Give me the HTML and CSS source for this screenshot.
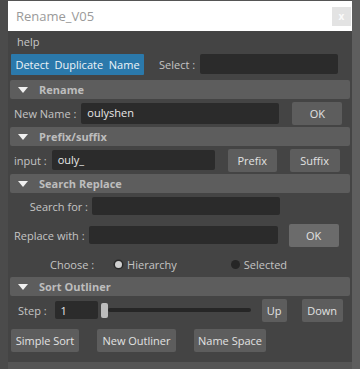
FILE: index.html
```html
<!DOCTYPE html>
<html>
<head>
<meta charset="utf-8">
<link rel="stylesheet" href="styles.css">
</head>
<body>
<div class="desk">
  <div class="win">
    <div class="titlebar">
      <span class="title">Rename_V05</span>
      <span class="close">x</span>
    </div>
    <div class="content">
      <div class="menu">help</div>
      <div class="row r-top">
        <button class="btn blue">Detect&nbsp; Duplicate&nbsp; Name</button>
        <span class="lbl sel-lbl">Select :</span>
        <div class="field sel-field"></div>
      </div>

      <div class="hdr"><span class="tri"></span>Rename</div>
      <div class="row r-name">
        <span class="lbl">New Name :</span>
        <div class="field f-name">oulyshen</div>
        <button class="btn ok1">OK</button>
      </div>

      <div class="hdr"><span class="tri"></span>Prefix/suffix</div>
      <div class="row r-pre">
        <span class="lbl">input :</span>
        <div class="field f-pre">ouly_</div>
        <button class="btn b-pre">Prefix</button>
        <button class="btn b-suf">Suffix</button>
      </div>

      <div class="hdr"><span class="tri"></span>Search Replace</div>
      <div class="row r-search">
        <span class="lbl l-search">Search for :</span>
        <div class="field f-search"></div>
      </div>
      <div class="row r-replace">
        <span class="lbl">Replace with :</span>
        <div class="field f-replace"></div>
        <button class="btn ok2">OK</button>
      </div>
      <div class="row r-choose">
        <span class="lbl l-choose">Choose :</span>
        <span class="radio on"></span><span class="lbl l-hier">Hierarchy</span>
        <span class="radio off"></span><span class="lbl">Selected</span>
      </div>

      <div class="hdr"><span class="tri"></span>Sort Outliner</div>
      <div class="row r-step">
        <span class="lbl l-step">Step :</span>
        <div class="field f-step">1</div>
        <div class="slider"><span class="handle"></span><span class="track"></span></div>
        <button class="btn b-up">Up</button>
        <button class="btn b-down">Down</button>
      </div>
      <div class="row r-btns">
        <button class="btn b-simple">Simple Sort</button>
        <button class="btn b-new">New Outliner</button>
        <button class="btn b-ns">Name Space</button>
      </div>
    </div>
  </div>
</div>
</body>
</html>
```

FILE: styles.css
```css
html, body {
  margin: 0;
  padding: 0;
}
body {
  width: 360px;
  height: 369px;
  overflow: hidden;
  background: #575757;
  font-family: "Open Sans", "Noto Sans", sans-serif;
  font-size: 11px;
  color: #c4c4c4;
}
.desk {
  height: 369px;
  background: linear-gradient(to right, #4b4b4b 0 8px, #555 8px 352px, #5e5e5e 352px);
  padding-top: 1px;
  box-sizing: border-box;
}
.win {
  margin-left: 8px;
  width: 344px;
}
.titlebar {
  height: 30px;
  background: #ffffff;
  display: flex;
  align-items: center;
  justify-content: space-between;
  padding: 0 1px 0 8px;
  box-sizing: border-box;
}
.title {
  color: #9a9a9a;
  font-size: 13px;
  font-family: "Open Sans", sans-serif;
}
.close {
  width: 19px;
  height: 19px;
  background: #e3e3e3;
  color: #fafafa;
  font-size: 10px;
  font-weight: bold;
  display: flex;
  align-items: center;
  justify-content: center;
}
.content {
  background: #444444;
  height: 331px;
  box-sizing: border-box;
  padding: 0 2px 0 2px;
}
.menu {
  height: 21px;
  line-height: 21px;
  padding-left: 7px;
  color: #c8c8c8;
}
.row {
  display: flex;
  align-items: center;
}
.lbl {
  white-space: nowrap;
}
.btn {
  font-family: inherit;
  font-size: 11px;
  color: #e2e2e2;
  background: #5d5d5d;
  border: none;
  border-radius: 2px;
  padding: 0;
  height: 23px;
  margin: 0;
}
.btn.blue {
  background: #2b79ab;
  color: #eef4f8;
  width: 133px;
  height: 21px;
  margin-left: 1px;
  border-radius: 1px;
}
.field {
  background: #2b2b2b;
  border-radius: 2px;
  height: 20px;
  line-height: 20px;
  color: #e8e8e8;
  padding-left: 6px;
  box-sizing: border-box;
  font-size: 11px;
}
.r-top {
  height: 24px;
  margin-bottom: 4px;
}
.sel-lbl {
  margin-left: 15px;
}
.sel-field {
  width: 138px;
  margin-left: 5px;
}
.hdr {
  height: 19px;
  background: #5d5d5d;
  border-radius: 2px;
  display: flex;
  align-items: center;
  color: #bdbdbd;
  font-weight: bold;
  font-size: 11px;
}
.tri {
  width: 0;
  height: 0;
  border-left: 5px solid transparent;
  border-right: 5px solid transparent;
  border-top: 6px solid #f0f0f0;
  margin-left: 8px;
  margin-right: 11px;
}
.r-name {
  height: 28px;
  padding-left: 4px;
}
.f-name {
  width: 198px;
  margin-left: 5px;
  height: 21px;
}
.ok1 {
  width: 50px;
  margin-left: 13px;
}
.r-pre {
  height: 28px;
  padding-left: 4px;
}
.f-pre {
  width: 163px;
  margin-left: 5px;
}
.b-pre {
  width: 49px;
  margin-left: 13px;
}
.b-suf {
  width: 50px;
  margin-left: 13px;
}
.r-search {
  height: 26px;
}
.l-search {
  width: 78px;
  text-align: right;
}
.f-search {
  width: 188px;
  margin-left: 4px;
  height: 18px;
}
.r-replace {
  height: 32px;
  padding-left: 4px;
}
.f-replace {
  width: 189px;
  margin-left: 4px;
  height: 18px;
}
.ok2 {
  width: 50px;
  margin-left: 11px;
  background: #6b6b6b;
}
.r-choose {
  height: 26px;
}
.l-choose {
  margin-left: 40px;
}
.radio {
  width: 7px;
  height: 7px;
  border-radius: 50%;
  background: #262626;
  display: inline-block;
  margin-right: 5px;
}
.radio.on {
  background: #d0d0d0;
  box-shadow: 0 0 0 1.5px #2a2a2a;
  margin-left: 21px;
}
.radio.off {
  width: 9px;
  height: 9px;
  margin-left: 54px;
  margin-right: 4px;
}
.r-step {
  height: 28px;
}
.l-step {
  margin-left: 8px;
}
.f-step {
  width: 43px;
  margin-left: 8px;
  height: 18px;
}
.slider {
  display: flex;
  align-items: center;
  width: 150px;
  margin-left: 3px;
}
.handle {
  width: 7px;
  height: 15px;
  background: #bdbdbd;
  border-radius: 2px;
  flex: none;
}
.track {
  flex: 1;
  height: 4px;
  background: #262626;
  border-radius: 2px;
}
.b-up {
  width: 25px;
  margin-left: 11px;
}
.b-down {
  width: 41px;
  margin-left: 15px;
}
.r-btns {
  height: 32px;
  padding-left: 1px;
}
.b-simple {
  width: 68px;
}
.b-new {
  width: 79px;
  margin-left: 18px;
}
.b-ns {
  width: 72px;
  margin-left: 18px;
}
```
